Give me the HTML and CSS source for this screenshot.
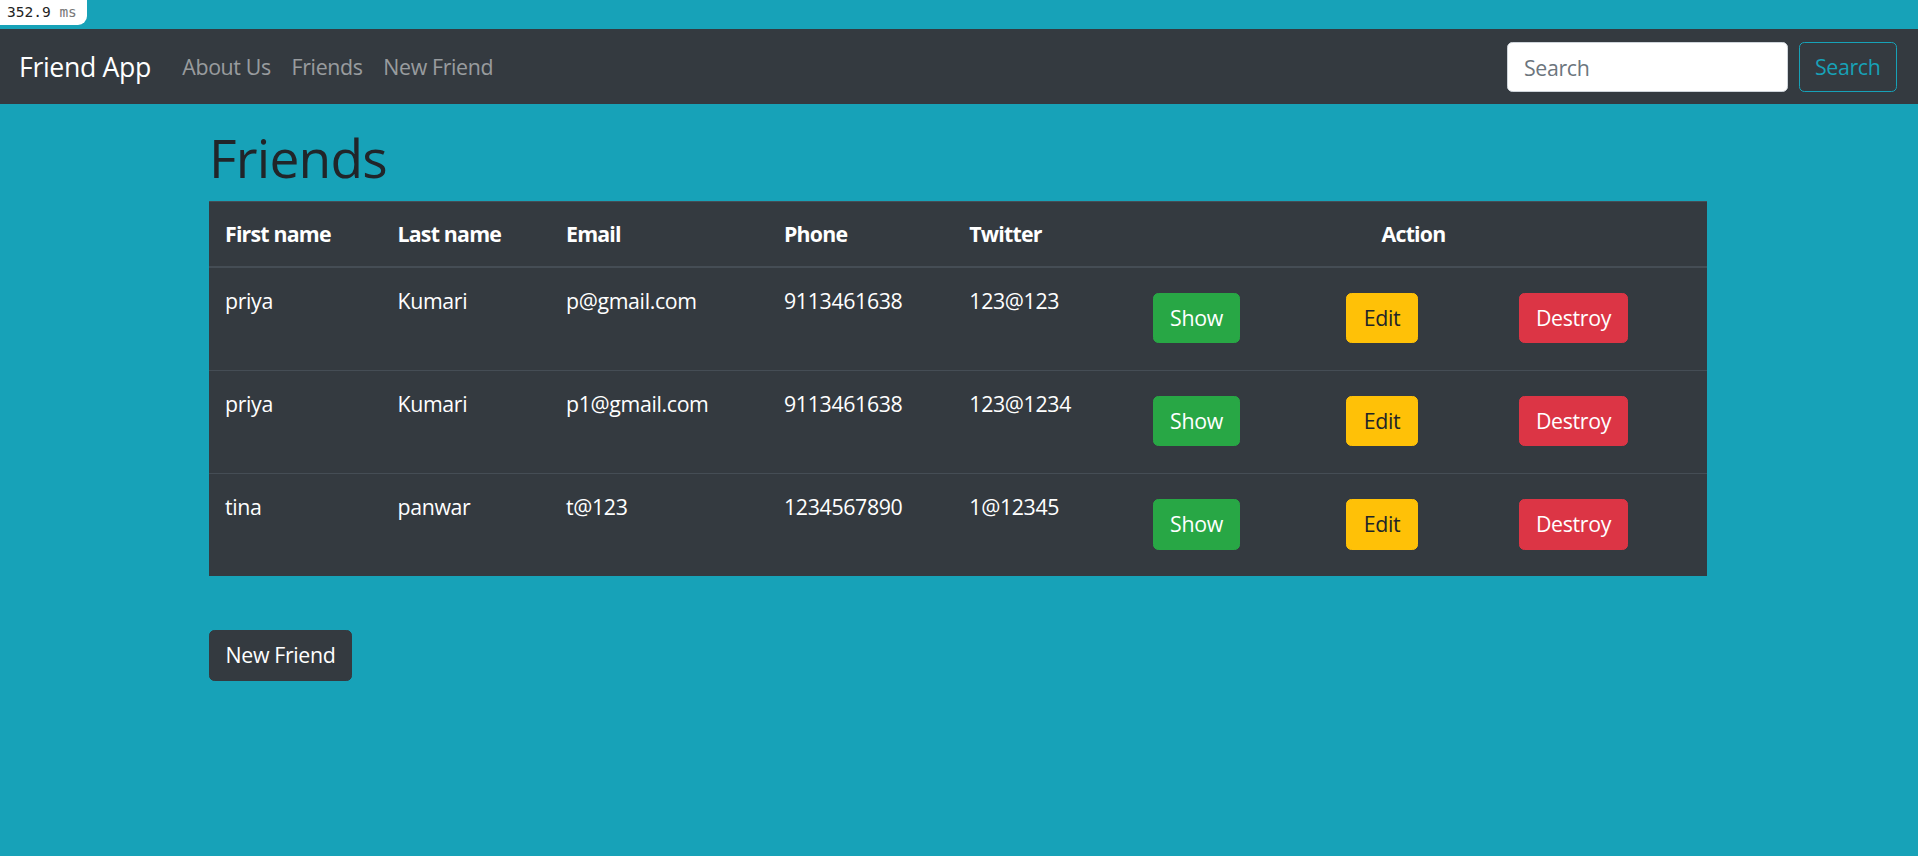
FILE: index.html
```html
<!DOCTYPE html>
<html lang="en">
<head>
<meta charset="utf-8">
<title>Friend App</title>
<link rel="stylesheet" href="styles.css">
</head>
<body>
<div class="profiler"><span class="num">352.9</span> <span class="unit">ms</span></div>
<div class="topgap"></div>
<nav class="navbar">
  <a class="brand" href="#">Friend App</a>
  <ul class="nav">
    <li><a href="#">About Us</a></li>
    <li><a href="#">Friends</a></li>
    <li><a href="#">New Friend</a></li>
  </ul>
  <form class="search">
    <input class="search-input" type="search" placeholder="Search">
    <button class="btn btn-outline-info" type="button">Search</button>
  </form>
</nav>
<main class="container">
  <h1 class="title">Friends</h1>
  <table class="table">
    <colgroup>
      <col class="c1"><col class="c2"><col class="c3"><col class="c4"><col class="c5"><col class="c6"><col class="c7"><col class="c8">
    </colgroup>
    <thead>
      <tr>
        <th>First name</th>
        <th>Last name</th>
        <th>Email</th>
        <th>Phone</th>
        <th>Twitter</th>
        <th colspan="3" class="center">Action</th>
      </tr>
    </thead>
    <tbody>
      <tr>
        <td>priya</td><td>Kumari</td><td>p@gmail.com</td><td>9113461638</td><td>123@123</td>
        <td><a class="btn btn-success" href="#">Show</a></td>
        <td><a class="btn btn-warning" href="#">Edit</a></td>
        <td><a class="btn btn-danger" href="#">Destroy</a></td>
      </tr>
      <tr>
        <td>priya</td><td>Kumari</td><td>p1@gmail.com</td><td>9113461638</td><td>123@1234</td>
        <td><a class="btn btn-success" href="#">Show</a></td>
        <td><a class="btn btn-warning" href="#">Edit</a></td>
        <td><a class="btn btn-danger" href="#">Destroy</a></td>
      </tr>
      <tr>
        <td>tina</td><td>panwar</td><td>t@123</td><td>1234567890</td><td>1@12345</td>
        <td><a class="btn btn-success" href="#">Show</a></td>
        <td><a class="btn btn-warning" href="#">Edit</a></td>
        <td><a class="btn btn-danger" href="#">Destroy</a></td>
      </tr>
    </tbody>
  </table>
  <a class="btn btn-dark new-btn" href="#">New Friend</a>
</main>
</body>
</html>
```
FILE: styles.css
```css
html, body {
  margin: 0;
  padding: 0;
}
body {
  background: #17a2b8;
  font-family: "Open Sans", "Noto Sans", "Liberation Sans", sans-serif;
  font-size: 21.33px;
  line-height: 32px;
  letter-spacing: -0.35px;
  color: #212529;
  min-height: 856px;
}
.profiler {
  position: absolute;
  top: 0;
  left: 0;
  width: 80px;
  height: 25px;
  padding-left: 7px;
  background: #fff;
  border-bottom-right-radius: 9px;
  font-family: "DejaVu Sans Mono", monospace;
  font-size: 14.5px;
  line-height: 24px;
  letter-spacing: 0;
  color: #222;
  white-space: pre;
}
.profiler .unit { color: #777; }
.topgap { height: 29px; }

.navbar {
  display: flex;
  align-items: center;
  background: #343a40;
  height: 75px;
  box-sizing: border-box;
  padding: 1px 21.33px 0 19px;
}
.brand {
  color: #fff;
  text-decoration: none;
  font-size: 26.67px;
  line-height: 40px;
  margin-right: 21px;
}
.nav {
  display: flex;
  list-style: none;
  margin: 0;
  padding: 0;
  flex: 1;
}
.nav a {
  display: block;
  padding: 0 10.4px;
  color: rgba(255,255,255,.5);
  text-decoration: none;
}
.search {
  display: flex;
  align-items: center;
  margin: 0;
}
.search-input {
  width: 281px;
  height: 50.67px;
  box-sizing: border-box;
  padding: 8px 16px;
  border: 1.33px solid #ced4da;
  border-radius: 5.33px;
  font-family: inherit;
  font-size: 21.33px;
  letter-spacing: -0.35px;
  color: #495057;
  background: #fff;
  margin-right: 10.67px;
  outline: none;
}
.search-input::placeholder { color: #6c757d; }

.btn {
  display: inline-block;
  box-sizing: border-box;
  height: 50.67px;
  padding: 8px 16px;
  border: 1.33px solid transparent;
  border-radius: 5.33px;
  font-family: inherit;
  font-size: 21.33px;
  line-height: 32px;
  letter-spacing: -0.35px;
  text-decoration: none;
  text-align: center;
  white-space: nowrap;
}
.btn-outline-info {
  background: transparent;
  border-color: #17a2b8;
  color: #17a2b8;
  width: 98px;
  padding: 0;
}
.btn-success { background: #28a745; border-color: #28a745; color: #fff; width: 87px; padding: 8px 0; }
.btn-warning { background: #ffc107; border-color: #ffc107; color: #212529; width: 72px; padding: 8px 0; }
.btn-danger { background: #dc3545; border-color: #dc3545; color: #fff; width: 109px; padding: 8px 0; }
.btn-dark { background: #343a40; border-color: #343a40; color: #fff; width: 143px; padding: 8px 0; }

.container {
  width: 1498px;
  margin-left: 209px;
  padding-top: 22px;
}
.title {
  margin: 0 0 10.67px;
  font-size: 53.33px;
  line-height: 64px;
  font-weight: 500;
  letter-spacing: -0.8px;
  color: #212529;
}
.table {
  width: 1498px;
  table-layout: fixed;
  border-collapse: collapse;
  background: #343a40;
  color: #fff;
  margin-bottom: 21.33px;
}
.c1 { width: 172.5px; }
.c2 { width: 168.5px; }
.c3 { width: 218px; }
.c4 { width: 185.3px; }
.c5 { width: 183.7px; }
.c6 { width: 193px; }
.c7 { width: 173px; }
.c8 { width: 204px; }
.table th, .table td {
  padding: 16px;
  text-align: left;
  vertical-align: top;
  border-top: 1.33px solid #454d55;
}
.table td { padding-top: 17px; padding-bottom: 15px; }
.table th {
  font-weight: 700;
  letter-spacing: -0.8px;
  border-bottom: 2.67px solid #454d55;
}
.table th.center { text-align: center; padding-right: 33px; }
.table td .btn { margin: 8px 0 11.5px; }
.new-btn { margin-top: 33px; }
```
